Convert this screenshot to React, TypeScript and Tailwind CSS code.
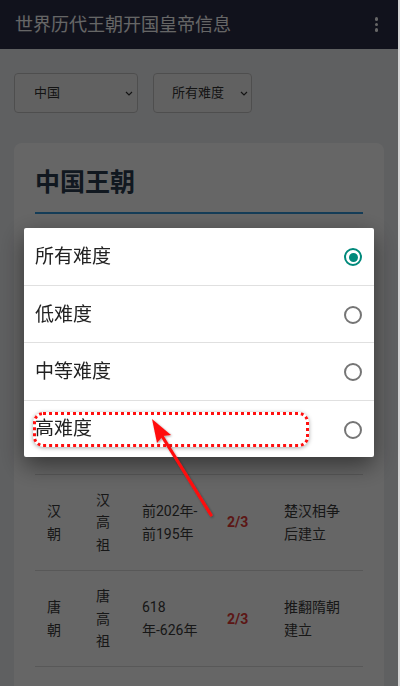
import React from 'react';

const rows = [
  { dynasty: '汉朝', founder: '汉高祖', reign: '前202年-前195年', level: '2/3', note: '楚汉相争后建立' },
  { dynasty: '唐朝', founder: '唐高祖', reign: '618年-626年', level: '2/3', note: '推翻隋朝建立' },
];

const options = ['所有难度', '低难度', '中等难度', '高难度'];

function Chevron() {
  return (
    <svg width="8" height="5" viewBox="0 0 8 5" className="shrink-0">
      <path d="M1 1l3 3 3-3" fill="none" stroke="#333" strokeWidth="1.2" />
    </svg>
  );
}

function Radio({ checked }: { checked: boolean }) {
  if (checked) {
    return (
      <span className="w-[18px] h-[18px] rounded-full border-2 border-[#00897b] flex items-center justify-center">
        <span className="w-[9px] h-[9px] rounded-full bg-[#00897b]" />
      </span>
    );
  }
  return <span className="w-[18px] h-[18px] rounded-full border-2 border-[#757575]" />;
}

export default function App() {
  return (
    <div className="w-[400px] h-[686px] overflow-hidden flex font-['Roboto','Noto_Sans_CJK_SC',sans-serif]">
      <div className="w-[398px] h-full bg-[#eef0f3]">
        <header className="h-[49px] bg-[#2b2d48] flex items-center justify-between pl-[15px] pr-[20px]">
          <h1 className="text-[18px] text-white">世界历代王朝开国皇帝信息</h1>
          <div className="flex flex-col gap-[2px]">
            <span className="w-[3.5px] h-[3.5px] rounded-full bg-white" />
            <span className="w-[3.5px] h-[3.5px] rounded-full bg-white" />
            <span className="w-[3.5px] h-[3.5px] rounded-full bg-white" />
          </div>
        </header>

        <div className="flex gap-[15px] pt-[24px] px-[14px]">
          <div className="w-[124px] h-[40px] bg-[#f3f3f3] border border-[#c4c4c4] rounded-[4px] flex items-center justify-between pl-[19px] pr-[4px] text-[13px] text-[#333]">
            中国
            <Chevron />
          </div>
          <div className="w-[99px] h-[40px] bg-[#f3f3f3] border border-[#c4c4c4] rounded-[4px] flex items-center justify-between pl-[18px] pr-[3px] text-[13px] text-[#333]">
            所有难度
            <Chevron />
          </div>
        </div>

        <div className="mt-[30px] mx-[14px] w-[370px] bg-white rounded-lg px-[21px] pt-[25px] pb-12">
          <h2 className="text-[25px] font-bold leading-[30px] pb-[14px] border-b-2 border-[#3498db] text-[#2c3e50]">中国王朝</h2>
          {/* area hidden behind the dialog */}
          <div className="h-[260px]" />
          <table className="w-[328px] table-fixed text-[14px] leading-[22.4px] text-[#3a3a3a]">
            <colgroup>
              <col className="w-[49px]" />
              <col className="w-[46px]" />
              <col className="w-[85px]" />
              <col className="w-[57px]" />
              <col className="w-[91px]" />
            </colgroup>
            <tbody>
              {rows.map((r) => (
                <tr key={r.dynasty} className="border-y border-[#dcdcdc]">
                  <td className="px-[12px] py-[14px] align-middle">{r.dynasty}</td>
                  <td className="px-[12px] py-[14px] align-middle">{r.founder}</td>
                  <td className="px-[12px] py-[14px] align-middle">{r.reign}</td>
                  <td className="px-[12px] py-[14px] align-middle font-bold text-[#e53935]">{r.level}</td>
                  <td className="px-[12px] py-[14px] align-middle">{r.note}</td>
                </tr>
              ))}
            </tbody>
          </table>
        </div>
      </div>
      <div className="w-[2px] h-full bg-[#d6d6d6]" />

      {/* dim overlay */}
      <div className="fixed left-0 top-0 w-[398px] h-[686px] bg-black/60" />

      {/* dialog */}
      <div className="fixed left-[24px] top-[228px] w-[350px] bg-white rounded-[2px] shadow-[0_8px_24px_rgba(0,0,0,0.5)]">
        {options.map((o, i) => (
          <div
            key={o}
            className={`flex items-center justify-between pl-[11px] pr-[12px] pt-[2px] text-[19px] text-[#222] ${i < options.length - 1 ? 'h-[57.5px] border-b border-[#e0e0e0]' : 'h-[56px]'}`}
          >
            {o}
            <Radio checked={i === 0} />
          </div>
        ))}
      </div>

      {/* annotation */}
      <div className="fixed left-[33px] top-[412px] w-[276px] h-[35px] border-[3px] border-dotted border-[#ff1010] rounded-[10px] shadow-[0_1px_4px_rgba(0,0,0,0.35)]" />
      <svg className="fixed left-0 top-0 pointer-events-none" width="400" height="686" viewBox="0 0 400 686">
        <defs>
          <filter id="sh" x="-20%" y="-20%" width="140%" height="140%">
            <feDropShadow dx="1" dy="1" stdDeviation="1.2" floodColor="#000" floodOpacity="0.35" />
          </filter>
        </defs>
        <g filter="url(#sh)">
          <line x1="211" y1="515" x2="162" y2="436" stroke="#ff1010" strokeWidth="3.2" strokeLinecap="round" />
          <path d="M152 419 L171 435 L163 436 L157 443 Z" fill="#ff1010" />
        </g>
      </svg>
    </div>
  );
}
